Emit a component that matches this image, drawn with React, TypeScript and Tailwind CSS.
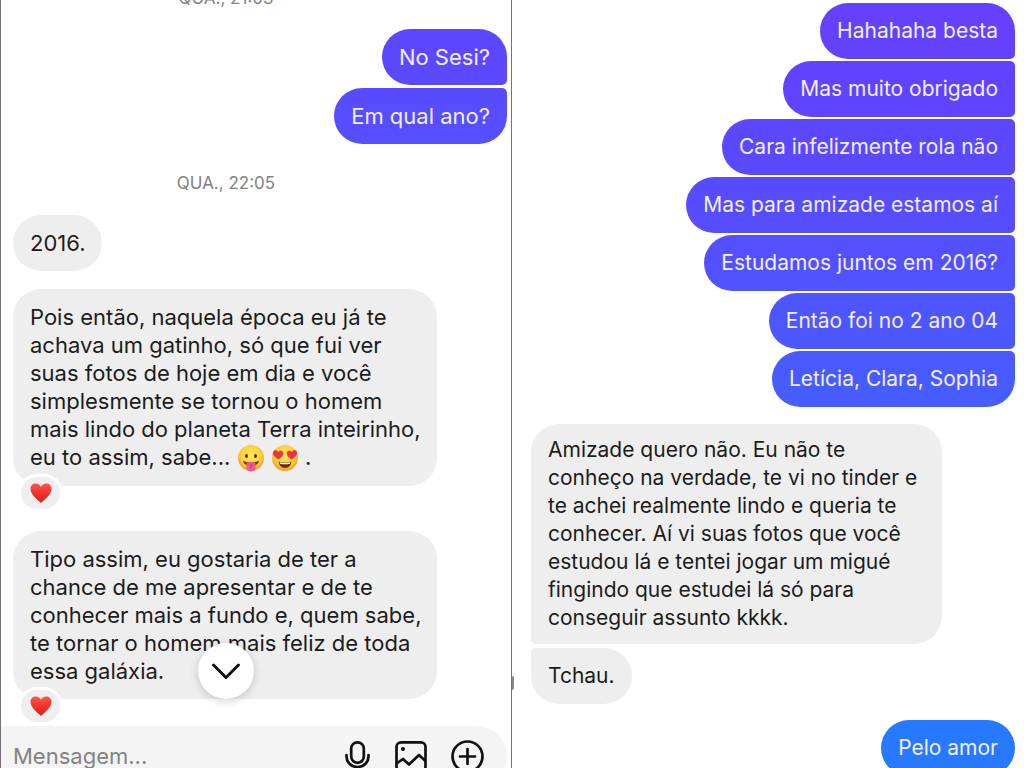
import clsx from 'clsx';

type Sent = { text: string; color: string };

const leftSent: Sent[] = [
  { text: 'No Sesi?', color: 'bg-linear-to-b from-[#5e46ff] to-[#5a4aff]' },
  { text: 'Em qual ano?', color: 'bg-linear-to-b from-[#594bff] to-[#544fff]' },
];

const rightSent: Sent[] = [
  { text: 'Hahahaha besta', color: 'bg-linear-to-b from-[#6640ff] to-[#6242ff]' },
  { text: 'Mas muito obrigado', color: 'bg-linear-to-b from-[#6242ff] to-[#5e45ff]' },
  { text: 'Cara infelizmente rola não', color: 'bg-linear-to-b from-[#5d46ff] to-[#594aff]' },
  { text: 'Mas para amizade estamos aí', color: 'bg-linear-to-b from-[#584bff] to-[#554eff]' },
  { text: 'Estudamos juntos em 2016?', color: 'bg-linear-to-b from-[#544fff] to-[#5053ff]' },
  { text: 'Então foi no 2 ano 04', color: 'bg-linear-to-b from-[#4f54ff] to-[#4b58ff]' },
  { text: 'Letícia, Clara, Sophia', color: 'bg-linear-to-b from-[#4a59ff] to-[#465dff]' },
];

function SentGroup({ messages, className }: { messages: Sent[]; className?: string }) {
  return (
    <div className={clsx('flex flex-col items-end', className)}>
      {messages.map((m, i) => (
        <p
          key={m.text}
          className={clsx(
            'rounded-l-[28px] px-[17px] py-3.5 whitespace-nowrap text-[#f1eeff]',
            i === 0 ? 'rounded-tr-[28px]' : 'rounded-tr-[5px]',
            i === messages.length - 1 ? 'rounded-br-[28px]' : 'rounded-br-[5px]',
            m.color,
          )}
        >
          {m.text}
        </p>
      ))}
    </div>
  );
}

function DateLabel({ children }: { children: string }) {
  return <p className="pr-15 text-center text-[17px] leading-6 text-[#828282]">{children}</p>;
}

function Tongue() {
  return (
    <svg role="img" aria-label="😛" viewBox="0 0 28 28" className="inline-block size-7 align-[-7px]">
      <defs>
        <radialGradient id="face" cx="50%" cy="40%" r="60%">
          <stop offset="0%" stopColor="#ffe95c" />
          <stop offset="65%" stopColor="#fdcf3c" />
          <stop offset="100%" stopColor="#ee9c22" />
        </radialGradient>
      </defs>
      <circle cx="14" cy="14" r="13" fill="url(#face)" />
      <ellipse cx="9.5" cy="12" rx="1.5" ry="2" fill="#5b3512" />
      <ellipse cx="18.5" cy="12" rx="1.5" ry="2" fill="#5b3512" />
      <path d="M6 17q8 3 16 0-1.500 5-8 5t-8-5z" fill="#63300f" />
      <path d="M9.5 19q4.500-1.500 9 0v4.500q0 4-4.500 4t-4.500-4z" fill="#f0568f" />
      <path d="M14 20v4" stroke="#c9316c" strokeWidth="1" />
    </svg>
  );
}

function HeartEyes() {
  return (
    <svg role="img" aria-label="😍" viewBox="0 0 28 28" className="inline-block size-7 align-[-7px]">
      <circle cx="14" cy="14" r="13" fill="url(#face)" />
      <path d="M7.500 15.500C3 13 1 9.800 2.200 7.700c1.200-2 4-1.700 5 .4 1.500-1.900 4.300-1.700 5 .5.700 2.400-1.600 5-4.700 6.900z" fill="#ee3340" />
      <path d="M20.500 15.500c4.500-2.500 6.500-5.700 5.300-7.800-1.200-2-4-1.700-5 .4-1.500-1.900-4.300-1.700-5 .5-.7 2.400 1.600 5 4.700 6.900z" fill="#ee3340" />
      <path d="M7.500 17.500q6.500 2.300 13 0-.8 6.500-6.500 6.500t-6.500-6.500z" fill="#63300f" />
      <path d="M8.500 18.300q5.500 1.500 11 0l-.6 1.500q-4.900 1-9.800 0z" fill="#fff" />
    </svg>
  );
}

function Reaction() {
  return (
    <div className="absolute -bottom-[26px] left-[5px] flex h-[38px] w-[45px] items-center justify-center rounded-full border-3 border-white bg-[#efefef]">
      <svg role="img" aria-label="❤️" viewBox="0 0 22 20" className="h-5 w-[22px]">
        <defs>
          <linearGradient id="heart" x1="0" y1="0" x2="0" y2="1">
            <stop offset="0%" stopColor="#f8584a" />
            <stop offset="45%" stopColor="#f3352f" />
            <stop offset="100%" stopColor="#d81f20" />
          </linearGradient>
        </defs>
        <path d="M11 20C7.500 16.500.500 12 .500 5.800.500 2.500 2.800.500 5.700.500 8.200.500 10.200 2 11 4 11.800 2 13.800.500 16.300.500c2.900 0 5.200 2 5.200 5.300C21.500 12 14.500 16.500 11 20z" fill="url(#heart)" />
      </svg>
    </div>
  );
}

function Composer() {
  return (
    <form className="mt-[27px] mr-1 flex h-[60px] shrink-0 items-center rounded-r-full bg-[#f4f4f4] pr-[22px] pl-3">
      <input
        type="text"
        aria-label="Mensagem"
        placeholder="Mensagem..."
        className="min-w-0 flex-1 bg-transparent outline-none placeholder:text-[#828282]"
      />
      <div className="flex items-center gap-5 text-[#111]">
        <button type="button" aria-label="Gravar áudio">
          <svg viewBox="0 0 36 36" fill="none" stroke="currentColor" strokeWidth="2.7" strokeLinecap="round" className="size-9">
            <rect x="14.200" y="4.300" width="12.600" height="20.500" rx="6.300" />
            <path d="M9.500 17v1.500a11 10.500 0 0 0 22 0V17M20.500 29v5" />
          </svg>
        </button>
        <button type="button" aria-label="Enviar imagem">
          <svg viewBox="0 0 36 36" fill="none" stroke="currentColor" strokeWidth="2.7" strokeLinejoin="round" className="size-9">
            <rect x="3.500" y="4.300" width="29" height="29" rx="4.500" />
            <circle cx="10" cy="11" r="2" fill="currentColor" stroke="none" />
            <path d="M3.500 25.500l6.500-4.500 6 5.500 10-9.500 6.500 6" />
          </svg>
        </button>
        <button type="button" aria-label="Mais opções">
          <svg viewBox="0 0 36 36" fill="none" stroke="currentColor" strokeWidth="2.700" strokeLinecap="round" className="size-9">
            <circle cx="18.500" cy="18.500" r="15" />
            <path d="M18.500 11v15M11 18.500h15" />
          </svg>
        </button>
      </div>
    </form>
  );
}

const received = 'bg-[#eeeeee] pl-[17px] text-[#1c1c1c]';

export default function App() {
  return (
    <main className="grid h-screen grid-cols-2 overflow-hidden bg-white font-['Inter',sans-serif] leading-7">
      {/* Left conversation */}
      <section className="relative flex min-h-0 flex-col overflow-hidden border-x border-[#737373] text-[22px]">
        <div className="-mt-3.5">
          <DateLabel>QUA., 21:03</DateLabel>
        </div>
        <SentGroup messages={leftSent} className="mt-[19px] gap-[3px] pr-1" />
        <div className="mt-[27px] mb-5">
          <DateLabel>QUA., 22:05</DateLabel>
        </div>
        <div className="flex flex-col items-start pl-3">
          <p className={clsx('rounded-[28px] py-3.5 pr-[17px]', received)}>2016.</p>
          <div className={clsx('relative mt-[18px] w-[424px] max-w-full rounded-[28px] py-3.5 pr-2', received)}>
            <p>
              Pois então, naquela época eu já te achava um gatinho, só que fui ver suas fotos de hoje em dia e você
              simplesmente se tornou o homem mais lindo do planeta Terra inteirinho, eu to assim, sabe... <Tongue />{' '}
              <HeartEyes /> .
            </p>
            <Reaction />
          </div>
          <div className={clsx('relative mt-[45px] w-[424px] max-w-full rounded-[28px] py-3.5 pr-2', received)}>
            <p>
              Tipo assim, eu gostaria de ter a chance de me apresentar e de te conhecer mais a fundo e, quem sabe, te
              tornar o homem mais feliz de toda essa galáxia.
            </p>
            <Reaction />
          </div>
        </div>
        <Composer />

        {/* Scroll to latest */}
        <button
          type="button"
          aria-label="Ir para o fim"
          className="absolute bottom-[69px] left-[197px] flex size-14 items-center justify-center rounded-full bg-white shadow-[0_2px_10px_rgba(0,0,0,0.18)]"
        >
          <svg viewBox="0 0 30 18" fill="none" stroke="#111" strokeWidth="3" strokeLinecap="round" strokeLinejoin="round" className="h-[18px] w-[30px]">
            <path d="M2.500 3L15 15.500 27.500 3" />
          </svg>
        </button>
      </section>

      {/* Right conversation */}
      <section className="relative flex min-h-0 flex-col overflow-hidden text-[21px]">
        <span className="absolute bottom-[78px] left-0 h-3.5 w-[2px] rounded-r-full bg-[#8a8a8a]" />
        <SentGroup messages={rightSent} className="mt-[3px] gap-0.5 pr-[9px]" />
        <div className="mt-[17px] flex flex-col items-start gap-1 pl-[19px]">
          <p className={clsx('max-w-[411px] rounded-[28px] rounded-bl-[5px] py-3 pr-[17px]', received)}>
            Amizade quero não. Eu não te conheço na verdade, te vi no tinder e te achei realmente lindo e queria te
            conhecer. Aí vi suas fotos que você estudou lá e tentei jogar um migué fingindo que estudei lá só para
            conseguir assunto kkkk.
          </p>
          <p className={clsx('rounded-[28px] rounded-tl-[5px] py-3.5 pr-[17px]', received)}>Tchau.</p>
        </div>
        <div className="mt-4 flex justify-end pr-[9px]">
          <p className="rounded-[28px] bg-[#2779ff] px-[17px] py-3.5 text-[#f1eeff]">Pelo amor</p>
        </div>
      </section>
    </main>
  );
}
